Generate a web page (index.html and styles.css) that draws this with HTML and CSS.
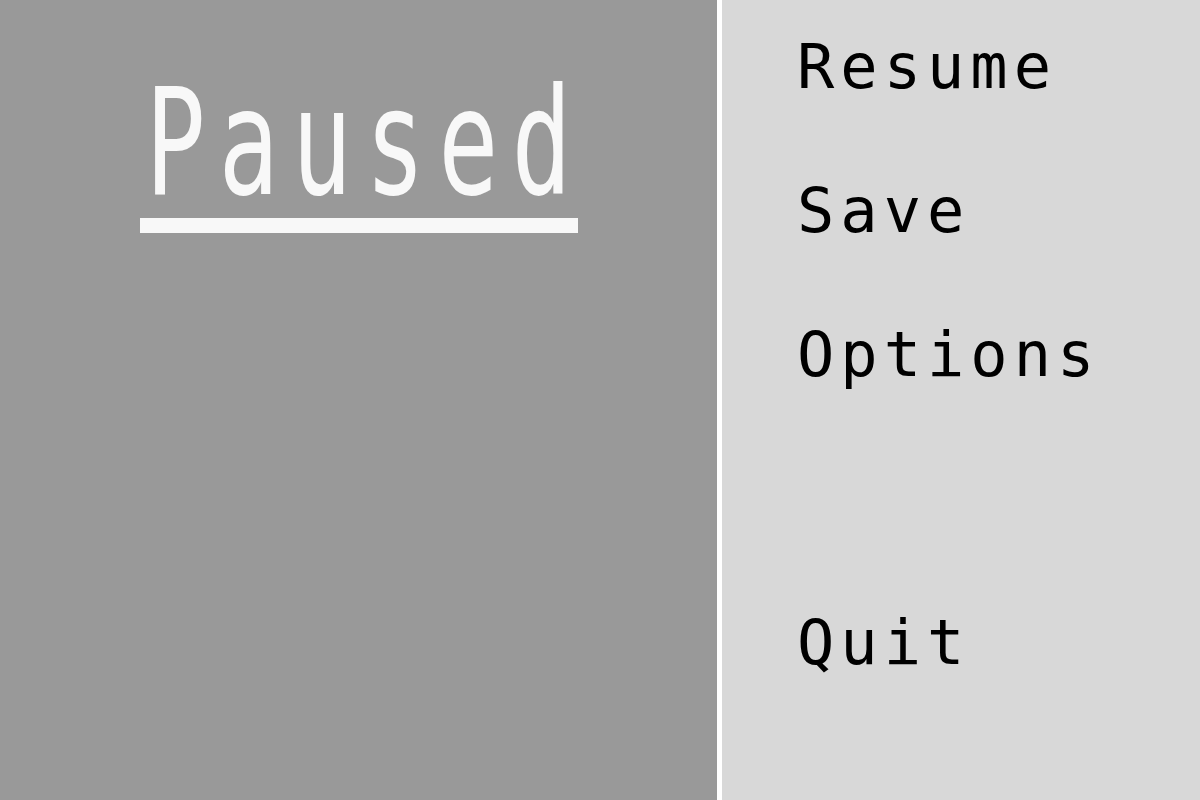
FILE: index.html
```html
<!DOCTYPE html>
<html>
<head>
<meta charset="utf-8">
<link rel="stylesheet" href="styles.css">
</head>
<body>
<div class="screen">
  <section class="pause-panel">
    <div class="title-block">
      <h1 class="title"><span class="title-text">Paused</span></h1>
      <div class="title-rule"></div>
    </div>
  </section>
  <nav class="menu">
    <div class="menu-item">Resume</div>
    <div class="menu-item">Save</div>
    <div class="menu-item">Options</div>
    <div class="menu-item menu-item--quit">Quit</div>
  </nav>
</div>
</body>
</html>
```

FILE: styles.css
```css
html, body {
  margin: 0;
  padding: 0;
  width: 1200px;
  height: 800px;
  overflow: hidden;
}

body {
  font-family: "DejaVu Sans Mono", "Liberation Mono", monospace;
}

.screen {
  display: flex;
  width: 1200px;
  height: 800px;
}

.pause-panel {
  width: 717px;
  flex: none;
  background: #999999;
}

.title-block {
  display: flex;
  flex-direction: column;
  align-items: center;
  padding-top: 104px;
}

.title {
  margin: 0;
  font-weight: normal;
  font-size: 100px;
  line-height: 120px;
  height: 106px;
  color: #f8f8f8;
  letter-spacing: 13px;
  padding-left: 13px;
}

.title-text {
  display: inline-block;
  transform: scaleY(1.475);
  transform-origin: 50% 85%;
}

.title-rule {
  width: 438px;
  height: 15px;
  background: #f8f8f8;
  margin-top: 8px;
}

.menu {
  flex: 1;
  background: #d8d8d8;
  border-left: 5px solid #ffffff;
  padding-left: 75px;
  display: flex;
  flex-direction: column;
}

.menu-item {
  font-size: 62px;
  line-height: 144px;
  height: 144px;
  letter-spacing: 6px;
  color: #000000;
  margin-top: -5px;
  margin-bottom: 5px;
}

.menu-item--quit {
  margin-top: 139px;
}
```
